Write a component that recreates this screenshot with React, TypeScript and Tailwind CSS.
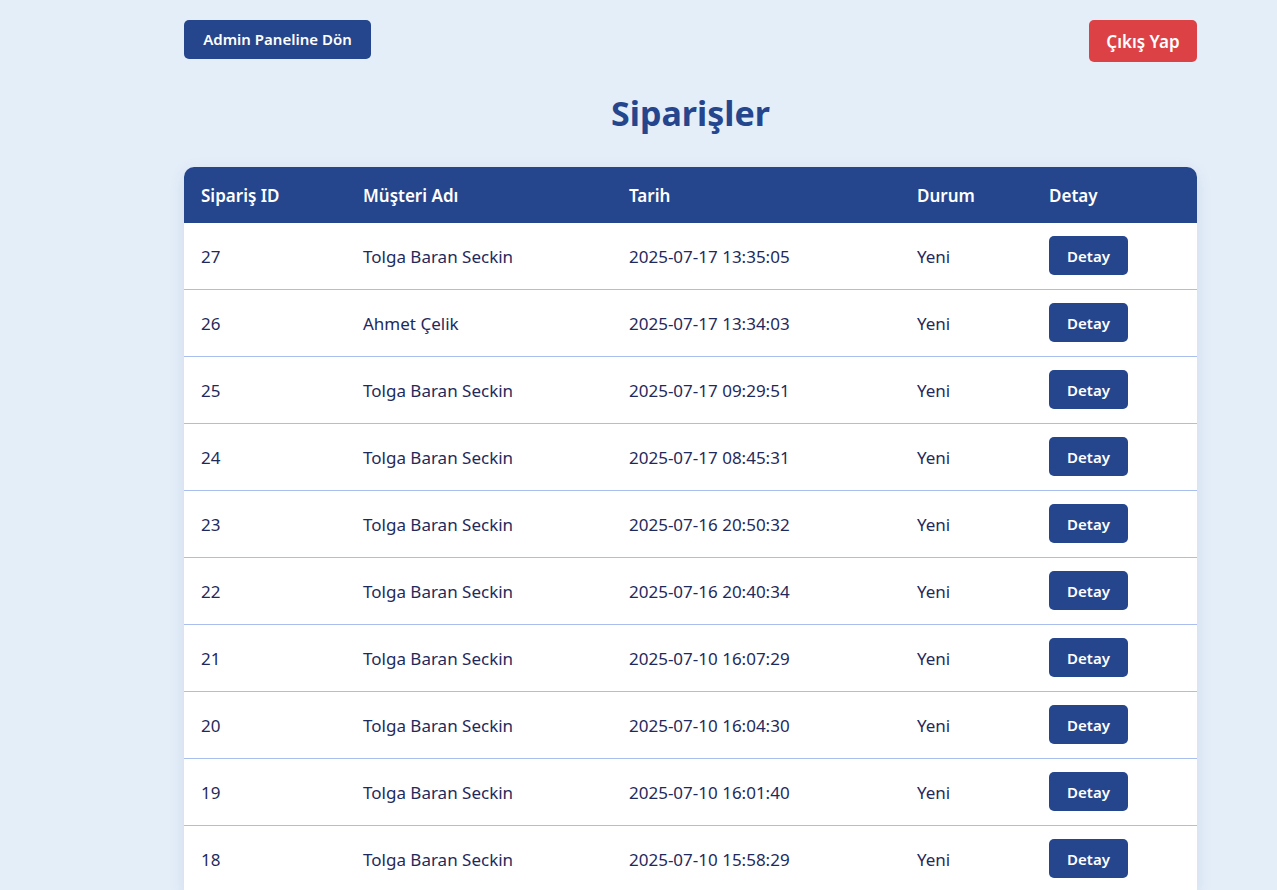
import React from "react";

const rows = [
  { id: 27, name: "Tolga Baran Seckin", date: "2025-07-17 13:35:05" },
  { id: 26, name: "Ahmet Çelik", date: "2025-07-17 13:34:03" },
  { id: 25, name: "Tolga Baran Seckin", date: "2025-07-17 09:29:51" },
  { id: 24, name: "Tolga Baran Seckin", date: "2025-07-17 08:45:31" },
  { id: 23, name: "Tolga Baran Seckin", date: "2025-07-16 20:50:32" },
  { id: 22, name: "Tolga Baran Seckin", date: "2025-07-16 20:40:34" },
  { id: 21, name: "Tolga Baran Seckin", date: "2025-07-10 16:07:29" },
  { id: 20, name: "Tolga Baran Seckin", date: "2025-07-10 16:04:30" },
  { id: 19, name: "Tolga Baran Seckin", date: "2025-07-10 16:01:40" },
  { id: 18, name: "Tolga Baran Seckin", date: "2025-07-10 15:58:29" },
];

export default function App() {
  return (
    <div
      className="min-h-screen bg-[#e4eef9] text-[#1f2a5c]"
      style={{ fontFamily: '"Noto Sans", "Open Sans", sans-serif' }}
    >
      <div className="ml-[184px] w-[1013px] pt-[20px]">
        <div className="flex items-start justify-between">
          <button className="h-[39px] w-[187px] rounded-[5px] bg-[#25468d] text-[15px] font-semibold text-white">
            Admin Paneline Dön
          </button>
          <button className="h-[42px] w-[108px] rounded-[5px] bg-[#dc4245] pt-[1px] text-[17px] font-semibold text-white">
            Çıkış Yap
          </button>
        </div>
        <h1 className="mt-[26px] text-center text-[34px] font-bold leading-[50px] text-[#25468d]">
          Siparişler
        </h1>
        <div className="mt-[29px] overflow-hidden rounded-t-[10px] bg-white shadow-[0_4px_16px_rgba(37,70,141,0.10)]">
          <div className="grid h-[56px] grid-cols-[162px_266px_288px_132px_165px] items-center bg-[#25468d] pt-[2px] text-[17px] font-semibold text-white">
            <div className="pl-[17px]">Sipariş ID</div>
            <div className="pl-[17px]">Müşteri Adı</div>
            <div className="pl-[17px]">Tarih</div>
            <div className="pl-[17px]">Durum</div>
            <div className="pl-[17px]">Detay</div>
          </div>
          {rows.map((r) => (
            <div
              key={r.id}
              className="grid h-[67px] grid-cols-[162px_266px_288px_132px_165px] items-center border-b border-[#a9bdee] text-[17px]"
            >
              <div className="pl-[17px] pt-[2px]">{r.id}</div>
              <div className="pl-[17px] pt-[2px]">{r.name}</div>
              <div className="pl-[17px] pt-[2px]">{r.date}</div>
              <div className="pl-[17px] pt-[2px]">Yeni</div>
              <div className="pb-[1px] pl-[17px]">
                <button className="h-[39px] w-[79px] rounded-[5px] bg-[#25468d] pt-[2px] text-[15px] font-semibold text-white">
                  Detay
                </button>
              </div>
            </div>
          ))}
        </div>
      </div>
    </div>
  );
}
